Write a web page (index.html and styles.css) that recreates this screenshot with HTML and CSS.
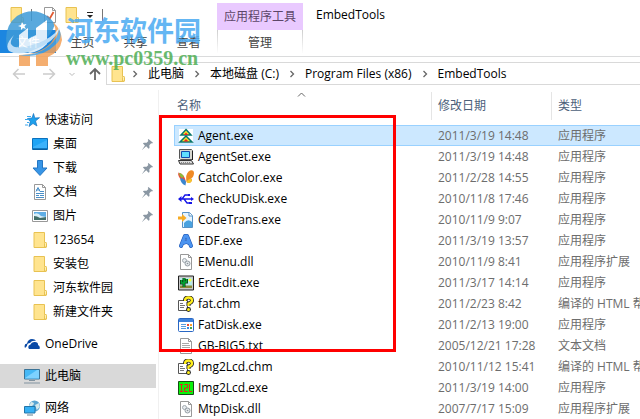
FILE: index.html
```html
<!DOCTYPE html>
<html lang="zh-CN">
<head>
  <meta charset="UTF-8">
  <title>EmbedTools</title>
  <link rel="stylesheet" href="styles.css">
</head>
<body>

<!-- Shared icons -->
<svg class="defs" aria-hidden="true">
  <symbol id="folder" viewBox="0 0 16 16"><path d="M2 .5h10.500v10h1.500v5H2z" fill="#ffe48f" stroke="#e8c252"/><path d="M12.500 15V11.500q0-1 1-1t1 1V15z" fill="#fff0b5" stroke="#e8c252"/></symbol>
  <symbol id="chevron" viewBox="0 0 6 8"><path d="M1.500 1l3 3-3 3" fill="none" stroke="#666" stroke-width="1.300"/></symbol>
  <symbol id="pin" viewBox="0 0 12 12"><path d="M7 0l5 4-1 1-1-.3-2 2 .2 3-1 1-2.600-2.700L0 12l3.200-4.800L1 5l1-1 3 .2 2-2L6.300 1z" fill="#8a97a3"/></symbol>
  <symbol id="page" viewBox="0 0 16 16"><path d="M2.500.5h8l3 3v12h-11z" fill="#fff" stroke="#999"/><path d="M10.500.5v3h3" fill="none" stroke="#999"/></symbol>
  <symbol id="dll" viewBox="0 0 16 16"><use href="#page"/><circle cx="6.500" cy="6.500" r="2" fill="#e8ecef" stroke="#a3abb1"/><circle cx="9.500" cy="9.500" r="2.500" fill="#e4e8eb" stroke="#949da4"/><circle cx="9.500" cy="9.500" r=".8" fill="#8b949b"/></symbol>
  <symbol id="chm" viewBox="0 0 16 16"><path d="M.5 4.500h9v10h-9z" fill="#fff" stroke="#555"/><path d="M2 7.500h3M2 9.500h5M2 11.500h4" stroke="#777"/><path d="M7 5q0-3.500 3.500-3.500T14 4.500q0 2-3.500 3v2.500" fill="none" stroke="#222" stroke-width="4"/><circle cx="10.500" cy="13.500" r="2.400" fill="#222"/><path d="M7 5q0-3.500 3.500-3.500T14 4.500q0 2-3.500 3v2.500" fill="none" stroke="#ffee1c" stroke-width="2.300"/><circle cx="10.500" cy="13.500" r="1.500" fill="#ffee1c"/></symbol>
</svg>

<header class="titlebar">
  <div class="quick">
    <svg class="icon"><use href="#folder"/></svg>
    <i class="divider"></i>
    <svg class="icon" viewBox="0 0 16 16"><use href="#page"/><path d="M5 9l2.500 3 4-7" fill="none" stroke="#e05a33" stroke-width="1.800"/></svg>
    <svg class="icon"><use href="#folder"/></svg>
    <svg class="more" viewBox="0 0 8 8"><path d="M1 1.500h6" stroke="#222"/><path d="M1 4h6L4 7z" fill="#222"/></svg>
    <i class="divider"></i>
  </div>
  <div class="context-label">应用程序工具</div>
  <h1>EmbedTools</h1>
</header>

<nav class="tabs">
  <button class="file">文件</button>
  <button>主页</button>
  <button>共享</button>
  <button>查看</button>
  <button class="context">管理</button>
</nav>

<div class="address">
  <div class="history">
    <button aria-label="后退"><svg class="arrow" viewBox="0 0 14 12"><path d="M13 6H2M6.500 1L1.500 6l5 5" fill="none" stroke="#ccc" stroke-width="1.500"/></svg></button>
    <button aria-label="前进"><svg class="arrow" viewBox="0 0 14 12"><path d="M1 6h11M7.500 1l5 5-5 5" fill="none" stroke="#ccc" stroke-width="1.500"/></svg></button>
    <button aria-label="历史"><svg class="drop" viewBox="0 0 8 8"><path d="M1.500 3L4 5.500 6.500 3" fill="none" stroke="#bbb"/></svg></button>
    <button aria-label="向上"><svg class="arrow" viewBox="0 0 14 14"><path d="M7 13V2M2 7l5-5 5 5" fill="none" stroke="#666" stroke-width="1.800"/></svg></button>
  </div>
  <div class="path">
    <svg class="icon"><use href="#folder"/></svg>
    <svg class="chevron"><use href="#chevron"/></svg>
    <a href="#">此电脑</a>
    <svg class="chevron"><use href="#chevron"/></svg>
    <a href="#">本地磁盘 (C:)</a>
    <svg class="chevron"><use href="#chevron"/></svg>
    <a href="#">Program Files (x86)</a>
    <svg class="chevron"><use href="#chevron"/></svg>
    <a href="#">EmbedTools</a>
  </div>
</div>

<div class="content">
  <nav class="sidebar">
    <ul>
      <li><a href="#"><svg class="icon" viewBox="0 0 16 16"><path d="M9.500 1.500l1.300 4.500 4.700-.3-4 3.300 1.500 5L9 11.500 5 14.500l1.300-5L3.500 6.500 8 6z" fill="#1ca0ec" stroke="#1a73c0" stroke-width=".7"/><path d="M3 4.500h4M1 7.500h4M3 10.500h2M1 13h3" stroke="#3aa8ee"/></svg>快速访问</a>
        <ul>
          <li><a href="#"><svg class="icon" viewBox="0 0 16 16"><path d="M.5 2.500h15v11H.5z" fill="#1fa4f5" stroke="#0b71bd"/><path d="M1 11L15 4v8H1z" fill="#3cb2fb"/><path d="M1 13h14" stroke="#084f88"/></svg>桌面<svg class="pin"><use href="#pin"/></svg></a></li>
          <li><a href="#"><svg class="icon" viewBox="0 0 16 16"><path d="M5.500.5h5v7.500h4.500l-7 7.500L1 8h4.500z" fill="#3795e6" stroke="#2577c4"/></svg>下载<svg class="pin"><use href="#pin"/></svg></a></li>
          <li><a href="#"><svg class="icon" viewBox="0 0 16 16"><use href="#page"/><path d="M4 7.500l2-4 2 4M4 6h4M8 7.500h4M4 9.500h8M8 11.500h4M4 13.500h8" fill="none" stroke="#4a8fc7"/><path d="M4 11h3v1H4z" fill="#4a8fc7"/></svg>文档<svg class="pin"><use href="#pin"/></svg></a></li>
          <li><a href="#"><svg class="icon" viewBox="0 0 16 16"><path d="M.5 2.500h15v11H.5z" fill="#fff" stroke="#999"/><path d="M2 4h12v8H2z" fill="#5faee5"/><path d="M2 6q4-2 7 2l5 1v1H2z" fill="#d7edf7"/><path d="M2 8q3 0 6 2l6-1v3H2z" fill="#426e68"/></svg>图片<svg class="pin"><use href="#pin"/></svg></a></li>
          <li><a href="#"><svg class="icon"><use href="#folder"/></svg>123654</a></li>
          <li><a href="#"><svg class="icon"><use href="#folder"/></svg>安装包</a></li>
          <li><a href="#"><svg class="icon"><use href="#folder"/></svg>河东软件园</a></li>
          <li><a href="#"><svg class="icon"><use href="#folder"/></svg>新建文件夹</a></li>
        </ul>
      </li>
      <li><a href="#"><svg class="icon" viewBox="0 0 16 16"><path d="M1 12Q-.5 8 3 7.500 4 3 8 3q3 0 4 2-4-1-6 2-3 0-3 3z" fill="#0a4aa6"/><path d="M5 13q-2-3 1.500-4.500Q7.500 5.500 11 6t3 3q2.500 1 1.500 4z" fill="#0a4aa6"/></svg>OneDrive</a></li>
      <li><a href="#" class="selected"><svg class="icon" viewBox="0 0 16 16"><path d="M.5 1.500h15v9.500H.5z" fill="#45b8f5" stroke="#3b7396"/><path d="M1 10L13 2h2v8.500H1z" fill="#7dd2ff"/><path d="M5 12.500h6M0 15h16" stroke="#8193a0"/></svg>此电脑</a></li>
      <li><a href="#"><svg class="icon" viewBox="0 0 16 16"><circle cx="10.500" cy="6" r="5.500" fill="#5aa5d2"/><path d="M7 2q3 0 3 2l-2 2H5zM11 5l4-2 .8 4-3 3z" fill="#d6e9ec"/><path d="M.5 6.500h10.500v6.500H.5z" fill="#36b0f4" stroke="#2375a8"/><path d="M3 15h6" stroke="#657e8d"/></svg>网络</a></li>
    </ul>
  </nav>

  <main class="files">
    <svg class="sort" viewBox="0 0 8 5"><path d="M.5 4.500L4 1l3.500 3.500" fill="none" stroke="#666"/></svg>
    <table>
      <thead>
        <tr>
          <th class="name"><button>名称</button></th>
          <th class="date"><button>修改日期</button></th>
          <th class="type"><button>类型</button></th>
        </tr>
      </thead>
      <tbody>
        <tr class="selected"><td><svg class="icon" viewBox="0 0 16 16"><path d="M1 1h14v14H1z" fill="#fff"/><path d="M8 1.500l5 5.500H3z" fill="#f5e62a" stroke="#08776d" stroke-width="1.500"/><path d="M8 4.500L10 7H6z" fill="#e22"/><path d="M8 8l6 6H2z" fill="#f5e62a" stroke="#08776d" stroke-width="1.500"/><path d="M8 11l2.500 2.500h-5z" fill="#e22"/></svg>Agent.exe</td><td>2011/3/19 14:48</td><td>应用程序</td></tr>
        <tr><td><svg class="icon" viewBox="0 0 16 16"><path d="M1.500.5h12l1 1v9h-12l-1-1z" fill="#d8d8d0" stroke="#555"/><path d="M3.500 2.500h8v6h-8z" fill="#5fdfff" stroke="#124cad"/><path d="M.5 11.500h13l2 3.500H2z" fill="#ddd" stroke="#333"/><path d="M3 13.500h10" stroke="#888" stroke-dasharray="1 1"/><path d="M14.500 2v9" stroke="#222"/></svg>AgentSet.exe</td><td>2011/3/19 14:48</td><td>应用程序</td></tr>
        <tr><td><svg class="icon" viewBox="0 0 16 16"><path d="M8.500 12Q7 3 12 .5q4-1 4 3-.5 4-3 5 2 1 0 3.500-2 2-4.500 0z" fill="#f08a24"/><path d="M12.500 8.500q2.500 1 .5 3.500-2 2-4.500 0 1-2.500 4-3.500z" fill="#f6c52d"/><path d="M8 13Q7 4 .5 2.500q-1 3 1.500 6z" fill="#e8503b"/><path d="M1 3q3 0 5 3.500L4 8Q1 6 1 3z" fill="#8dbb3a"/><path d="M2 8.500q4-1 6 3.500l-.5 3.500Q3 14 2 8.500z" fill="#3a86d0"/></svg>CatchColor.exe</td><td>2011/2/28 14:55</td><td>应用程序</td></tr>
        <tr><td><svg class="icon" viewBox="0 0 16 16"><path d="M2 8h12M4 8l3-4h3M6 8l3 4h3" fill="none" stroke="#1616e8" stroke-width="1.300"/><path d="M3.500 5v6L0 8zM13 6l3 2-3 2zM10 3h2v2h-2zM11 11h3v2h-3z" fill="#1616e8"/></svg>CheckUDisk.exe</td><td>2010/11/8 17:46</td><td>应用程序</td></tr>
        <tr><td><svg class="icon" viewBox="0 0 16 16"><path d="M4.500.5h7l3 3v12h-10z" fill="#e5f4ff" stroke="#5792c5"/><path d="M11 .5v3.500h3.500" fill="#fff" stroke="#5792c5"/><path d="M6 11q4-5 8-1v5H6z" fill="#4aa2df"/><path d="M0 4.500h4V2l4.500 4L4 10V7.500H0z" fill="#f6ab24"/></svg>CodeTrans.exe</td><td>2010/11/9 9:07</td><td>应用程序</td></tr>
        <tr><td><svg class="icon" viewBox="0 0 16 16"><path d="M3 13L7 3h2l4 10M5 10q4-2 6 0" fill="none" stroke="#174fae" stroke-width="4" stroke-linejoin="round" stroke-linecap="round"/><path d="M3 13L7 3h2l4 10M5 10q4-2 6 0" fill="none" stroke="#4c94f0" stroke-width="3" stroke-linejoin="round" stroke-linecap="round"/></svg>EDF.exe</td><td>2011/3/19 13:57</td><td>应用程序</td></tr>
        <tr><td><svg class="icon"><use href="#dll"/></svg>EMenu.dll</td><td>2010/11/9 8:41</td><td>应用程序扩展</td></tr>
        <tr><td><svg class="icon" viewBox="0 0 16 16"><path d="M.5 1h15v14H.5z" fill="#c8c8c8" stroke="#222"/><path d="M2 3h12v8H2z" fill="#b5ece9"/><path d="M2 10.500h12v2.500H2z" fill="#8a8a39"/><path d="M6 12V3M3.500 5v3H6M8.500 4v3H6" fill="none" stroke="#131" stroke-width="3"/><path d="M6 12V3M3.500 5v3H6M8.500 4v3H6" fill="none" stroke="#0a3" stroke-width="1.500"/><circle cx="12" cy="5" r="1.500" fill="#ff3"/></svg>ErcEdit.exe</td><td>2011/3/17 14:14</td><td>应用程序</td></tr>
        <tr><td><svg class="icon"><use href="#chm"/></svg>fat.chm</td><td>2011/2/23 8:42</td><td>编译的 HTML 帮助文件</td></tr>
        <tr><td><svg class="icon" viewBox="0 0 16 16"><rect x=".5" y="1.500" width="15" height="13" rx="1" fill="#fff" stroke="#2967c4"/><path d="M1 2h14v3H1z" fill="#3e82dd"/><path d="M3 7.500h5M3 9.500h5M3 11.500h5" stroke="#579ce0"/><path d="M9 7h2v2H9z" fill="#e64b35"/><path d="M12 7h2v2h-2z" fill="#f89f31"/><path d="M9 10h2v2H9z" fill="#388ae4"/><path d="M12 10h2v2h-2z" fill="#46a64c"/></svg>FatDisk.exe</td><td>2011/2/13 19:00</td><td>应用程序</td></tr>
        <tr><td><svg class="icon" viewBox="0 0 16 16"><use href="#page"/><path d="M4 5.500h7M4 7.500h8M4 9.500h8M4 11.500h8M4 13.500h8" stroke="#aaa"/></svg>GB-BIG5.txt</td><td>2005/12/21 17:28</td><td>文本文档</td></tr>
        <tr><td><svg class="icon"><use href="#chm"/></svg>Img2Lcd.chm</td><td>2010/11/12 15:41</td><td>编译的 HTML 帮助文件</td></tr>
        <tr><td><svg class="icon" viewBox="0 0 16 16"><path d="M.5 1.500h15v13H.5z" fill="#0bf10b" stroke="#164c16"/><path d="M2 4.500h3M3.500 4.500v7M2 11.500h3M6.500 4.500h3v3.500h-3v3.500h3M11.500 4v7.500H14" fill="none" stroke="#e02020"/></svg>Img2Lcd.exe</td><td>2011/3/19 14:00</td><td>应用程序</td></tr>
        <tr><td><svg class="icon"><use href="#dll"/></svg>MtpDisk.dll</td><td>2007/7/17 15:09</td><td>应用程序扩展</td></tr>
      </tbody>
    </table>
    <div class="highlight"></div>
  </main>
</div>

<div class="watermark">
  <svg class="logo" viewBox="0 0 58 56">
    <path d="M2 36Q-2 16 12 5 28-5 44 6l6 7Q44 32 22 38 8 42 2 36z" fill="#3d9bd8"/>
    <path d="M48 11q8 7 9 18-2 12-14 17v9H31V42l-6 2v11H14V44q20 0 32-12 8-9 2-21z" fill="#f3a158"/>
    <path d="M14 38V24l9-7v11l8-4V17l11-8v24q-8 8-17 9z" fill="#fff"/>
    <path d="M9 24Q-1 34 4 40q10 6 27-2 20-8 24-22-8 12-25 17-20 7-24 0-1-3 3-9z" fill="#d9edfa"/>
    <path d="M14 44q18 1 30-9 9-7 10-17 5 9-5 17-14 13-35 9z" fill="#4b9fdb"/>
    <path d="M17 11l1.500 2.500 3-.5-2 2.500 1.500 2.500-3-1-2 2V16l-3-1 3-1z" fill="#fff"/>
  </svg>
  <div>
    <strong>河东软件园</strong>
    <span>www.pc0359.cn</span>
  </div>
</div>

</body>
</html>
```
FILE: styles.css
```css
* {
  box-sizing: border-box;
}
body {
  display: flex;
  flex-direction: column;
  height: 100vh;
  margin: 0;
  overflow: hidden;
  background: #fff;
  color: #000;
  font: 12px/20px "Open Sans", "Noto Sans CJK SC", sans-serif;
  white-space: nowrap;
}
button {
  padding: 0;
  border: 0;
  background: none;
  color: inherit;
  font: inherit;
}
a {
  color: inherit;
  text-decoration: none;
}
ul {
  margin: 0;
  padding: 0;
  list-style: none;
}
svg {
  flex: none;
}
.defs {
  position: absolute;
  width: 0;
  height: 0;
}
.icon {
  width: 16px;
  height: 16px;
}

/* Title bar and ribbon */
.titlebar {
  display: flex;
  height: 30px;
}
.quick {
  display: flex;
  align-items: center;
  gap: 6px;
  width: 217px;
  padding-left: 9px;
}
.divider {
  width: 1px;
  height: 12px;
  margin-right: 4px;
  background: #777;
}
.more {
  width: 8px;
  height: 8px;
  margin-right: 2px;
}
.context-label {
  width: 86px;
  margin-top: 3px;
  background: #e9c9ff;
  color: #5c4668;
  line-height: 27px;
  text-align: center;
}
h1 {
  margin: 0 0 0 13px;
  font-size: 12px;
  font-weight: normal;
  line-height: 30px;
}
.tabs {
  display: flex;
  height: 27px;
  padding-bottom: 3px;
  border-bottom: 1px solid #dadbdc;
  color: #444;
}
.tabs button {
  width: 53px;
  padding-top: 2px;
}
.tabs .file {
  width: 56px;
  background: #1c86e0;
  color: #fff;
}
.tabs .context {
  width: 86px;
  margin-left: 2px;
  border: solid;
  border-width: 0 1px;
  border-image: linear-gradient(#ccc, #fff) 1;
}

/* Address bar */
.address {
  display: flex;
  padding: 5px 0;
}
.history {
  display: flex;
  align-items: center;
  gap: 14px;
  width: 106px;
  padding-left: 12px;
}
.history button {
  display: flex;
}
.history button + button {
  margin-left: 2px;
}
.history button:nth-child(n+3) {
  margin-left: -2px;
}
.arrow {
  width: 14px;
  height: 14px;
}
.drop {
  width: 8px;
  height: 8px;
}
.path {
  display: flex;
  flex: 1;
  align-items: center;
  gap: 10px;
  height: 23px;
  padding-left: 3px;
  border: 1px solid #d9d9d9;
  border-right: 0;
}
.path .icon {
  margin-right: -4px;
}
.chevron {
  width: 6px;
  height: 8px;
}

/* Sidebar */
.content {
  display: flex;
  flex: 1;
  min-height: 0;
}
.sidebar {
  width: 159px;
  padding-top: 18px;
  border-right: 1px solid #f0f0f0;
}
.sidebar > ul {
  display: flex;
  flex-direction: column;
  gap: 8px;
}
.sidebar a {
  display: flex;
  align-items: center;
  gap: 5px;
  height: 24px;
  margin-right: 2px;
  padding-left: 24px;
}
.sidebar ul ul a {
  padding-left: 32px;
}
.sidebar .selected {
  background: #d9d9d9;
}
.pin {
  width: 11px;
  height: 11px;
  margin: 0 3px 0 auto;
}

/* File list */
.files {
  position: relative;
  flex: 1;
  min-width: 0;
  padding: 2px 0 0 15px;
  overflow: hidden;
}
.sort {
  position: absolute;
  top: 2px;
  left: 138px;
  width: 9px;
  height: 5px;
}
table {
  width: 100%;
  table-layout: fixed;
  border-spacing: 0;
}
th {
  padding: 0 0 5px;
  font-weight: normal;
}
th button {
  display: block;
  width: 100%;
  height: 28px;
  padding-left: 6px;
  border-left: 1px solid #e5e5e5;
  color: #4c607a;
  text-align: left;
}
.name {
  width: 257px;
}
.name button {
  padding-left: 3px;
  border: 0;
}
.date {
  width: 120px;
}
td {
  height: 21px;
  padding: 0 0 0 7px;
  color: #6d6d6d;
}
td:first-child {
  padding-left: 4px;
  color: #000;
}
td .icon {
  margin-right: 4px;
  vertical-align: middle;
}
tr.selected td {
  background: #cce8ff;
  box-shadow: inset 0 1px #99d1ff, inset 0 -1px #99d1ff;
}
tr.selected td:first-child {
  box-shadow: inset 1px 1px #99d1ff, inset 0 -1px #99d1ff;
}
.highlight {
  position: absolute;
  top: 25px;
  left: 0;
  width: 237px;
  height: 237px;
  border: 3px solid #f00;
}

/* Watermark over the ribbon */
.watermark {
  position: absolute;
  top: 11px;
  left: 5px;
  display: flex;
  gap: 3px;
  opacity: .85;
  pointer-events: none;
}
.logo {
  width: 58px;
  height: 56px;
}
.watermark strong {
  display: block;
  margin-top: 2px;
  color: #4aaaf2;
  font: bold 27px/34px "Noto Sans CJK SC", sans-serif;
}
.watermark span {
  display: block;
  color: #4fae55;
  font: bold 20px/22px "Liberation Serif", serif;
}
```
